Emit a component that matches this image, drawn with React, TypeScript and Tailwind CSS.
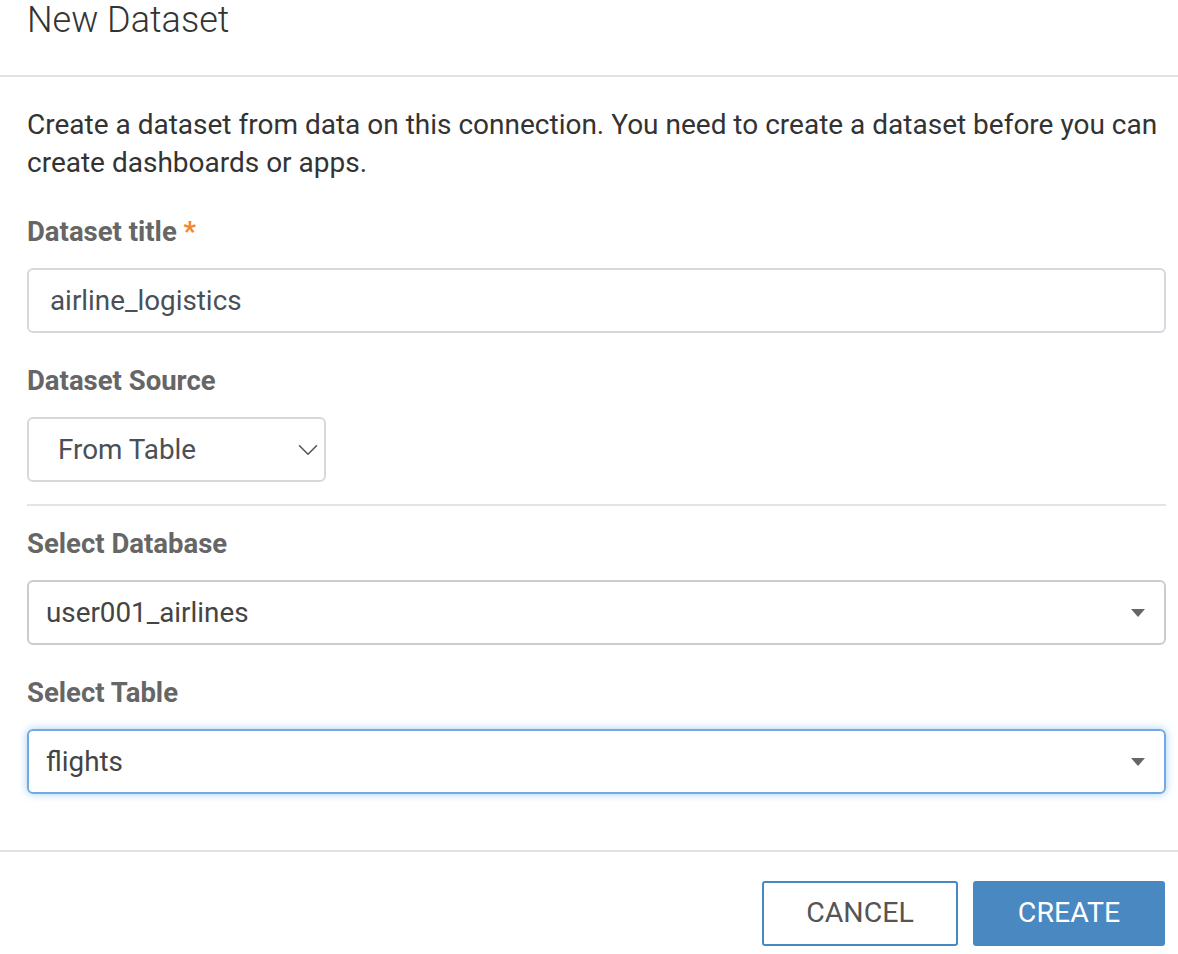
import { ChevronDown } from "lucide-react";

const Caret = () => (
  <svg width="14" height="8" viewBox="0 0 14 8" className="shrink-0">
    <path d="M0 0h14L7 8z" fill="#666" />
  </svg>
);

export default function App() {
  return (
    <div className="w-[1178px] h-[954px] bg-white overflow-hidden font-['Roboto',sans-serif]">
      {/* Header */}
      <div className="h-[77px] border-b-2 border-[#dee2e6] px-[27px]">
        <h1 className="text-[36px] font-light text-[#333] leading-[40px]">New Dataset</h1>
      </div>

      {/* Body */}
      <div className="px-[27px] pt-[29px] pb-[56px]">
        <p className="w-[1140px] text-[28px] leading-[38px] text-[#333]">
          Create a dataset from data on this connection. You need to create a dataset before you can
          create dashboards or apps.
        </p>

        <label className="block mt-[31px] text-[27.5px] leading-[38px] font-bold text-[#666]">
          Dataset title <span className="text-[#f0862e]">*</span>
        </label>
        <div className="mt-[17px] h-[65px] w-[1139px] rounded-[6px] border-2 border-[#d5d9de] flex items-center px-[21px] text-[27.8px] text-[#495057]">
          airline_logistics
        </div>

        <label className="block mt-[29px] text-[27.5px] leading-[38px] font-bold text-[#666]">
          Dataset Source
        </label>
        <div className="mt-[17px] h-[65px] w-[299px] rounded-[6px] border-2 border-[#d5d9de] flex items-center justify-between pl-[29px] pr-0 text-[27.8px] text-[#495057]">
          <span>From Table</span>
          <ChevronDown size={34} strokeWidth={1.1} color="#555" className="-mr-[1px]" />
        </div>

        <div className="mt-[22px] w-[1139px] border-t-2 border-[#e2e4e6]" />

        <label className="block mt-[19px] text-[27.5px] leading-[38px] font-bold text-[#666]">
          Select Database
        </label>
        <div className="mt-[17px] h-[65px] w-[1139px] rounded-[6px] border-2 border-[#cccccc] flex items-center justify-between pl-[17px] pr-[19px] text-[27.8px] text-[#444]">
          <span>user001_airlines</span>
          <Caret />
        </div>

        <label className="block mt-[29px] text-[27.5px] leading-[38px] font-bold text-[#666]">
          Select Table
        </label>
        <div className="mt-[17px] h-[65px] w-[1139px] rounded-[6px] border-2 border-[#73a9e3] shadow-[0_0_8px_rgba(102,175,233,0.6)] flex items-center justify-between pl-[17px] pr-[19px] text-[27.8px] text-[#444]">
          <span>flights</span>
          <Caret />
        </div>
      </div>

      {/* Footer */}
      <div className="border-t-2 border-[#dee2e6] px-[13px] pt-[29px] flex justify-end gap-[15px]">
        <button className="h-[65px] w-[196px] rounded-[3px] border-2 border-[#4a88c2] bg-white text-[28.5px] text-[#555] uppercase">
          Cancel
        </button>
        <button className="h-[65px] w-[192px] rounded-[3px] bg-[#4a88c2] text-[28.5px] text-white uppercase">
          Create
        </button>
      </div>
    </div>
  );
}
